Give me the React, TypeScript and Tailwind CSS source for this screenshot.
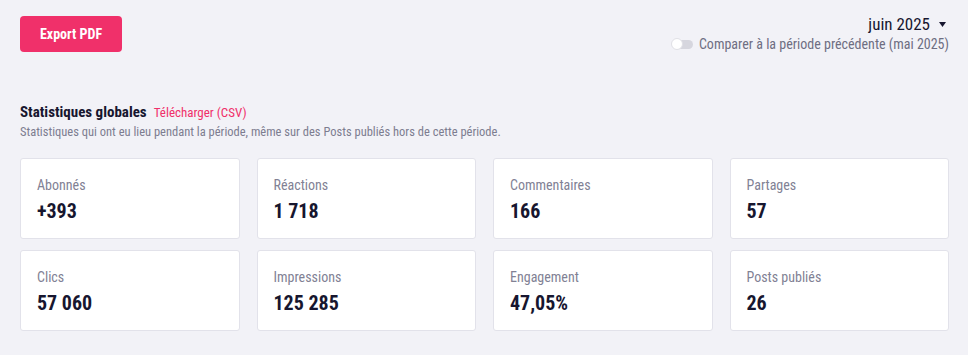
const STATS = [
  { label: 'Abonnés', value: '+393' },
  { label: 'Réactions', value: '1 718' },
  { label: 'Commentaires', value: '166' },
  { label: 'Partages', value: '57' },
  { label: 'Clics', value: '57 060' },
  { label: 'Impressions', value: '125 285' },
  { label: 'Engagement', value: '47,05%' },
  { label: 'Posts publiés', value: '26' },
];

function StatCard({ label, value }: { label: string; value: string }) {
  return (
    <div className="h-[81px] rounded-[3px] border border-[#e2e2ea] bg-white px-[16px] pt-[17px]">
      <div className="text-[14px] leading-[18px] text-[#818194]">{label}</div>
      <div className="mt-[5px] text-[20px] font-bold leading-[24px] text-[#17162f]">{value}</div>
    </div>
  );
}

export default function App() {
  return (
    <div className="min-h-[355px] w-full bg-[#f2f2f7] pl-[20px] pr-[19px] pt-[16px] font-['Roboto',sans-serif] font-stretch-condensed">
      {/* Header */}
      <div className="flex items-start justify-between">
        <button className="h-[36px] w-[102px] rounded-[4px] bg-[#f0306a] text-[14px] font-bold text-white">
          Export PDF
        </button>
        <div className="flex flex-col items-end">
          <div className="flex items-center gap-[9px] pr-[3px] text-[17px] leading-[16px] text-[#17162f]">
            juin 2025
            <svg width="7" height="5" viewBox="0 0 7 5">
              <path d="M0 0h7L3.5 5z" fill="#17162f" />
            </svg>
          </div>
          <div className="mt-[4px] flex items-center gap-[6px]">
            <span className="relative h-[9px] w-[21px] rounded-full bg-[#d6d6de]">
              <span className="absolute left-[-1px] top-[-1.5px] h-[12px] w-[12px] rounded-full border border-[#e0e0e6] bg-white" />
            </span>
            <span className="text-[14px] leading-[16px] text-[#6e6e82]">
              Comparer à la période précédente (mai 2025)
            </span>
          </div>
        </div>
      </div>

      {/* Section */}
      <div className="mt-[50px]">
        <div className="flex items-baseline gap-[7px]">
          <h2 className="text-[15px] font-bold leading-[20px] text-[#17162f]">Statistiques globales</h2>
          <a className="text-[13px] text-[#f0306a]">Télécharger (CSV)</a>
        </div>
        <p className="mt-[1px] text-[12.5px] leading-[16px] text-[#7d7d90]">
          Statistiques qui ont eu lieu pendant la période, même sur des Posts publiés hors de cette période.
        </p>
        <div className="mt-[18px] grid grid-cols-4 gap-x-[17px] gap-y-[11px]">
          {STATS.map((s) => (
            <StatCard key={s.label} label={s.label} value={s.value} />
          ))}
        </div>
      </div>
    </div>
  );
}
